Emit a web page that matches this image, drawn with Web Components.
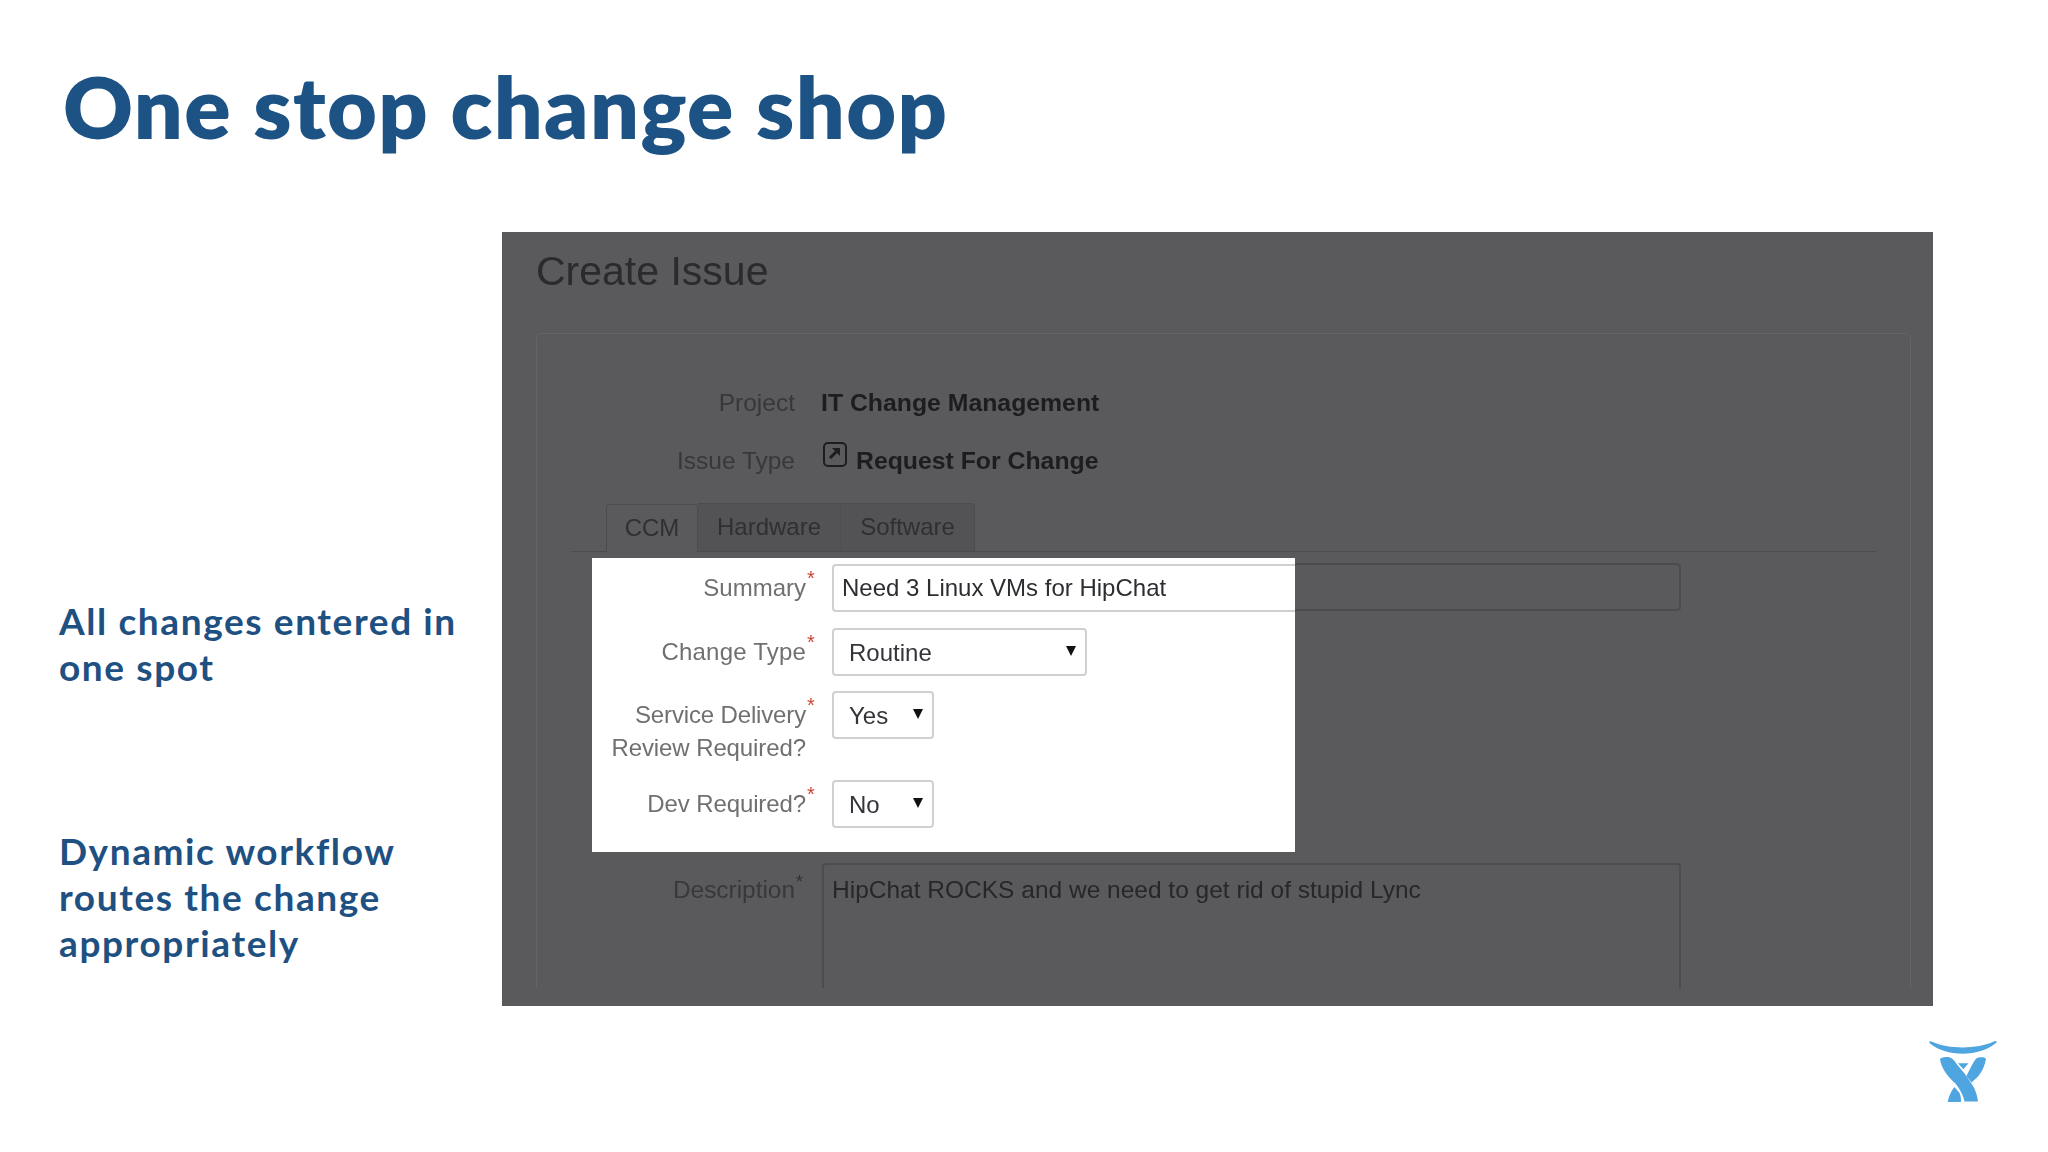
<!DOCTYPE html>
<html><head><meta charset="utf-8">
<style>
html,body{margin:0;background:#fff}
body{width:2048px;height:1152px;overflow:hidden;font-family:"Liberation Sans",Arial,sans-serif}
</style></head><body>
<slide-page>
  <slide-title slot="title">One stop change shop</slide-title>
  <side-note slot="notes">All changes entered in<br>one spot</side-note>
  <side-note slot="notes">Dynamic workflow<br>routes the change<br>appropriately</side-note>
  <issue-shot slot="shot"></issue-shot>
  <atl-logo slot="logo"></atl-logo>
</slide-page>
<script>
function def(name,html){
  customElements.define(name,class extends HTMLElement{
    constructor(){super();const r=this.attachShadow({mode:'open'});r.innerHTML=html;}
  });
}
def('slide-page',`<style>
:host{display:block;width:2048px;height:1152px;position:relative;color:#1d5285}
.top{padding:60px 0 0 63px;height:168px;box-sizing:border-box}
.main{display:flex;height:774px}
.notes{width:502px;flex:none;box-sizing:border-box;padding:366px 0 0 59px;display:flex;flex-direction:column;gap:138px}
.logo{position:absolute;left:1925px;top:1035px}
</style>
<div class="top"><slot name="title"></slot></div>
<div class="main" style="margin-top:64px">
  <div class="notes"><slot name="notes"></slot></div>
  <slot name="shot"></slot>
</div>
<div class="logo"><slot name="logo"></slot></div>`);
def('slide-title',`<style>:host{display:block;font:800 86px/92px Lato,"Liberation Sans",sans-serif;letter-spacing:1.4px;color:#1d5285;white-space:nowrap}</style><slot></slot>`);
def('side-note',`<style>:host{display:block;font:700 37px/46px Lato,"Liberation Sans",sans-serif;letter-spacing:1.6px;color:#1f5082;white-space:nowrap}</style><slot></slot>`);
def('atl-logo',`<style>:host{display:block;width:76px;height:72px}svg{display:block}</style>
<svg width="76" height="72" viewBox="0 0 76 72" fill="#4fa5e0">
<path d="M4.500 6.500C5 6 6 6 7 6.800 24 14.500 52 14.500 69.500 6.300 70.500 5.800 71.800 6.200 71.500 7.500 56 22 21 22.500 4.500 8z"/>
<path d="M15 24c2-2 8-2.500 10-1.500 3 1 4 3 7 7 4 5 9 10 13 17 4.500 6 7 12 8 20H39.500c-1-5.500-4.500-12.500-9-18C23 42 16 33 15 24z"/>
<path d="M61 23.500c-2-1.500-7-1.500-9-.5-3 2-6 9-10.500 18l5 6.500c6-5 12.500-11 14.500-24z"/>
<path d="M33 28.200h10.500l-5.200 6z"/>
<path d="M29.500 52l5 6c1.300 2.500 1.500 6 1.500 9H22.700c1-5.500 3.800-11.500 6.800-15z"/>
</svg>`);
def('issue-shot',`<style>
:host{display:block;flex:none;width:1431px;height:774px;background:#5a595b;position:relative;overflow:hidden;box-sizing:border-box;padding:0 22px 18px 34px;filter:blur(.35px)}
h1{margin:0;font:400 41px/52px "Liberation Sans",sans-serif;color:#2a2b2e;padding-top:13px;height:101px;box-sizing:border-box}
.card{height:655px;border:1px solid #656466;border-bottom:0;border-radius:6px 6px 0 0;box-sizing:border-box;padding:51px 0 0 0}
.row{display:flex;align-items:center}
.lab{width:258px;text-align:right;color:#2f3032;font-size:24.500px;line-height:36px;flex:none;position:relative;opacity:.8}
.val{margin-left:26px;font:700 24.800px/36px "Liberation Sans",sans-serif;color:#1c1d20;display:flex;align-items:center;gap:9px}
.val svg{margin:0 0 12px 2px}
.row+.row{margin-top:21px}
.tabs{display:flex;margin:24px 34px 0 34px;border-bottom:1px solid #4c4b4d;height:48px;padding-left:35px;box-sizing:content-box}
.tab{font-size:24px;line-height:46px;color:#2f3032;padding:0 18px;background:#535255;height:48px;box-sizing:border-box;border-top:1px solid #4c4b4d}
.tab.on{background:#5a595b;border:1px solid #4c4b4d;border-bottom:0;border-radius:4px 4px 0 0;position:relative;top:1px;width:92px;text-align:center;padding:0}
.tab.h{width:143px;padding:0;text-align:center;border-right:1px solid #4f4e50}
.tab.s{width:134px;padding:0;text-align:center;border-radius:0 4px 0 0;border-right:1px solid #4c4b4d}
.sum{height:48px;margin:11px 0 0 284px;width:860px;border:2px solid #4c4b4d;border-radius:4px;box-sizing:border-box}
.gap{height:252px}
.desc{display:flex;align-items:flex-start}
.desc .lab{width:258px;margin-top:9px;font-size:24.400px}
.star{color:#2a2928;font-size:18px;position:absolute;left:100%;top:-8px;margin-left:1px}
.ta{margin-left:27px;width:859px;height:200px;box-sizing:border-box;border:2px solid #4c4b4d;border-bottom:0;border-radius:4px 4px 0 0;padding:7px 8px;font-size:24.500px;line-height:36px;color:#26272a}
.clip{position:absolute;left:0;right:0;bottom:0;height:18px;background:#5a595b}
.spot{position:absolute;left:90px;top:326px;width:703px;height:294px;background:#fff;box-sizing:border-box;padding:6px 0 0 0;display:flex;flex-direction:column}
.f{display:flex;align-items:flex-start}
.fl{width:214px;flex:none;text-align:right;font-size:24px;line-height:33px;color:#6f7072;position:relative;padding-top:7px}
.fl i{font-style:normal;color:#d04437;position:absolute;left:100%;top:-2px;margin-left:1px;font-size:20px}
.inp{margin-left:26px;flex:1;height:48px;box-sizing:border-box;border:2px solid #d0d0d2;border-right:0;border-radius:4px 0 0 4px;font-size:24px;line-height:44px;padding-left:8px;color:#2c2e31}
.sel{margin-left:26px;height:48px;box-sizing:border-box;border:2px solid #d0d0d2;border-radius:4px;font-size:24px;line-height:46px;padding-left:15px;color:#33353a;position:relative}
.sel::after{content:"";position:absolute;right:9px;top:16px;border:5px solid transparent;border-top:10px solid #111;border-bottom:0}
</style>
<h1>Create Issue</h1>
<div class="card">
  <div class="row"><div class="lab">Project</div><div class="val">IT Change Management</div></div>
  <div class="row"><div class="lab">Issue Type</div><div class="val"><svg width="24" height="25" viewBox="0 0 24 25" fill="none" stroke="#1c1d20" stroke-width="2"><rect x="1" y="1" width="22" height="23" rx="4"/><path d="M7 16l8-8" stroke-width="3"/><path d="M9 6h8v8z" fill="#1c1d20" stroke="none"/></svg>Request For Change</div></div>
  <div class="tabs"><div class="tab on">CCM</div><div class="tab h">Hardware</div><div class="tab s">Software</div></div>
  <div class="sum"></div>
  <div class="gap"></div>
  <div class="desc"><div class="lab">Description<span class="star">*</span></div><div class="ta">HipChat ROCKS and we need to get rid of stupid Lync</div></div>
</div>
<div class="clip"></div>
<div class="spot">
  <div class="f"><div class="fl">Summary<i>*</i></div><div class="inp">Need 3 Linux VMs for HipChat</div></div>
  <div class="f" style="margin-top:16px"><div class="fl" style="letter-spacing:.2px">Change Type<i>*</i></div><div class="sel" style="width:255px">Routine</div></div>
  <div class="f" style="margin-top:15px"><div class="fl"><span style="letter-spacing:-.15px">Service Delivery</span><i>*</i><br><span style="letter-spacing:-.1px">Review Required?</span></div><div class="sel" style="width:102px">Yes</div></div>
  <div class="f" style="margin-top:16px"><div class="fl" style="letter-spacing:-.1px">Dev Required?<i>*</i></div><div class="sel" style="width:102px">No</div></div>
</div>`);
</script>
</body></html>
